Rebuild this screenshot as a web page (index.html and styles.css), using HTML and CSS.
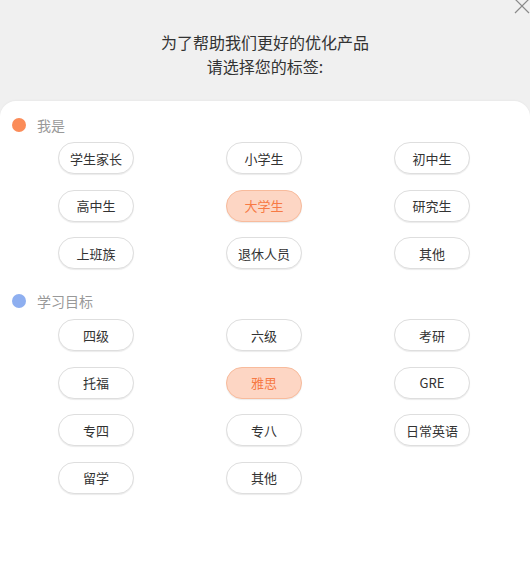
FILE: index.html
```html
<!DOCTYPE html>
<html lang="zh-CN">
<head>
<meta charset="utf-8">
<link rel="stylesheet" href="styles.css">
</head>
<body>
<div class="page">
  <svg class="close" width="16" height="16" viewBox="0 0 16 16"><path d="M1 -1 L15 13 M15 -1 L1 13" stroke="#8a8a8a" stroke-width="1.2" fill="none"/></svg>
  <header class="title">
    <div>为了帮助我们更好的优化产品</div>
    <div>请选择您的标签:</div>
  </header>
  <main class="card">
    <section class="group">
      <div class="group-head"><span class="dot dot-orange"></span><span>我是</span></div>
      <div class="tags">
        <span class="tag">学生家长</span>
        <span class="tag">小学生</span>
        <span class="tag">初中生</span>
        <span class="tag">高中生</span>
        <span class="tag tag-on">大学生</span>
        <span class="tag">研究生</span>
        <span class="tag">上班族</span>
        <span class="tag">退休人员</span>
        <span class="tag">其他</span>
      </div>
    </section>
    <section class="group group-second">
      <div class="group-head"><span class="dot dot-blue"></span><span>学习目标</span></div>
      <div class="tags">
        <span class="tag">四级</span>
        <span class="tag">六级</span>
        <span class="tag">考研</span>
        <span class="tag">托福</span>
        <span class="tag tag-on">雅思</span>
        <span class="tag">GRE</span>
        <span class="tag">专四</span>
        <span class="tag">专八</span>
        <span class="tag">日常英语</span>
        <span class="tag">留学</span>
        <span class="tag">其他</span>
      </div>
    </section>
  </main>
</div>
</body>
</html>
```

FILE: styles.css
```css
* { box-sizing: border-box; }
html, body {
  margin: 0;
  padding: 0;
  height: 100%;
}
body {
  background: #f0f0f0;
  font-family: "Noto Sans CJK SC", "Noto Sans", sans-serif;
  overflow: hidden;
}
.page {
  position: relative;
  width: 530px;
  height: 586px;
  display: flex;
  flex-direction: column;
}
.close {
  position: absolute;
  right: 0;
  top: 0;
}
.title {
  padding-top: 30px;
  height: 101px;
  text-align: center;
  font-size: 16px;
  line-height: 24px;
  color: #333;
}
.card {
  flex: 1;
  background: #fff;
  border-radius: 16px 16px 0 0;
  padding-top: 14px;
  box-shadow: 0 -1px 2px rgba(0,0,0,0.03);
}
.group-head {
  display: flex;
  align-items: center;
  height: 20px;
  padding-left: 12px;
  font-size: 14px;
  color: #999;
  margin-bottom: 7px;
}
.dot {
  width: 14px;
  height: 14px;
  border-radius: 50%;
  margin-right: 11px;
}
.dot-orange { background: #fb8c59; }
.dot-blue { background: #8eaff0; }
.group-second { margin-top: 22px; }
.group-second .group-head { margin-bottom: 8px; }
.tags {
  display: grid;
  grid-template-columns: repeat(3, 76px);
  column-gap: 92px;
  row-gap: 15.6px;
  padding-left: 58px;
}
.tag {
  height: 32px;
  border: 1px solid #dedede;
  border-radius: 16px;
  box-shadow: 0 1px 1px rgba(0,0,0,0.08);
  display: flex;
  align-items: center;
  justify-content: center;
  font-size: 13px;
  color: #333;
  background: #fff;
  white-space: nowrap;
}
.tag-on {
  background: #fdd6c4;
  border-color: #f8bb9c;
  color: #f77a45;
}
```
